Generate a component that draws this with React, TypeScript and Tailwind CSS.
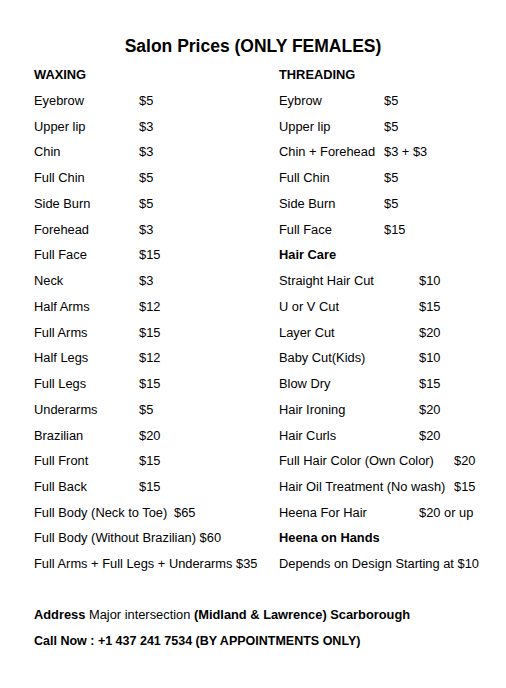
import React from "react";

type Row = { label: string; price?: string; pw?: number; bold?: boolean };

const left: Row[] = [
  { label: "WAXING", bold: true },
  { label: "Eyebrow", price: "$5" },
  { label: "Upper lip", price: "$3" },
  { label: "Chin", price: "$3" },
  { label: "Full Chin", price: "$5" },
  { label: "Side Burn", price: "$5" },
  { label: "Forehead", price: "$3" },
  { label: "Full Face", price: "$15" },
  { label: "Neck", price: "$3" },
  { label: "Half Arms", price: "$12" },
  { label: "Full Arms", price: "$15" },
  { label: "Half Legs", price: "$12" },
  { label: "Full Legs", price: "$15" },
  { label: "Underarms", price: "$5" },
  { label: "Brazilian", price: "$20" },
  { label: "Full Front", price: "$15" },
  { label: "Full Back", price: "$15" },
  { label: "Full Body (Neck to Toe)", price: "$65", pw: 140 },
  { label: "Full Body (Without Brazilian) $60" },
  { label: "Full Arms + Full Legs + Underarms $35" },
];

const right: Row[] = [
  { label: "THREADING", bold: true },
  { label: "Eybrow", price: "$5" },
  { label: "Upper lip", price: "$5" },
  { label: "Chin + Forehead", price: "$3 + $3" },
  { label: "Full Chin", price: "$5" },
  { label: "Side Burn", price: "$5" },
  { label: "Full Face", price: "$15" },
  { label: "Hair Care", bold: true },
  { label: "Straight Hair Cut", price: "$10", pw: 140 },
  { label: "U or V Cut", price: "$15", pw: 140 },
  { label: "Layer Cut", price: "$20", pw: 140 },
  { label: "Baby Cut(Kids)", price: "$10", pw: 140 },
  { label: "Blow Dry", price: "$15", pw: 140 },
  { label: "Hair Ironing", price: "$20", pw: 140 },
  { label: "Hair Curls", price: "$20", pw: 140 },
  { label: "Full Hair Color (Own Color)", price: "$20", pw: 175 },
  { label: "Hair Oil Treatment (No wash)", price: "$15", pw: 175 },
  { label: "Heena For Hair", price: "$20 or up", pw: 140 },
  { label: "Heena on Hands", bold: true },
  { label: "Depends on Design Starting at $10" },
];

function Col({ rows }: { rows: Row[] }) {
  return (
    <div className="flex flex-col">
      {rows.map((r, i) => (
        <div key={i} className="flex h-[25.74px] items-center whitespace-nowrap">
          {r.price ? (
            <>
              <span style={{ width: r.pw ?? 105 }} className="shrink-0">
                {r.label}
              </span>
              <span>{r.price}</span>
            </>
          ) : (
            <span className={r.bold ? "font-bold" : ""}>{r.label}</span>
          )}
        </div>
      ))}
    </div>
  );
}

export default function App() {
  return (
    <div
      className="w-[506px] h-[688px] bg-white text-black pt-[34px]"
      style={{ fontFamily: '"Liberation Sans", Arial, sans-serif' }}
    >
      <div className="h-[24px] leading-[24px] text-center text-[17.5px] font-bold">
        Salon Prices (ONLY FEMALES)
      </div>
      <div className="mt-[4px] grid grid-cols-[245px_1fr] pl-[34px] text-[12.85px]">
        <Col rows={left} />
        <Col rows={right} />
      </div>
      <div className="mt-[25px] pl-[34px] text-[12.85px]">
        <div className="h-[26.5px] flex items-center whitespace-nowrap">
          <span className="font-bold">Address</span>
          <span>&nbsp;Major intersection&nbsp;</span>
          <span className="font-bold">(Midland &amp; Lawrence) Scarborough</span>
        </div>
        <div className="h-[26.5px] flex items-center font-bold whitespace-nowrap text-[12.5px]">
          Call Now : +1 437 241 7534 (BY APPOINTMENTS ONLY)
        </div>
      </div>
    </div>
  );
}
